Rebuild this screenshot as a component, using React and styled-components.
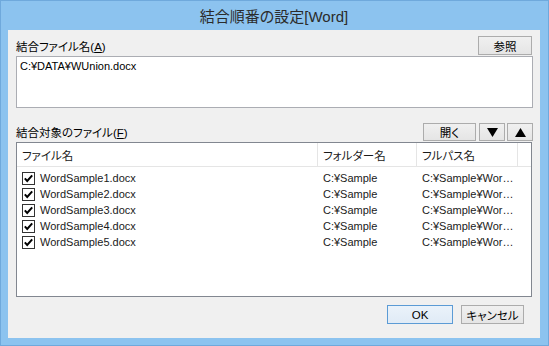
import React from 'react'
import styled, { createGlobalStyle } from 'styled-components'

const GlobalStyle = createGlobalStyle`
  html, body {
    margin: 0;
    padding: 0;
    background: #8cc3ef;
  }
  body {
    font-family: "Liberation Sans", "Noto Sans CJK JP", sans-serif;
    font-feature-settings: "palt";
  }
`

const Window = styled.div`
  width: 549px;
  height: 346px;
  box-sizing: border-box;
  background: #8cc3ef;
  border: 1px solid #6fa9dc;
  display: flex;
  flex-direction: column;
  padding: 0 8px 7px 7px;
`

const TitleBar = styled.div`
  height: 28px;
  display: flex;
  align-items: center;
  justify-content: center;
  font-size: 15px;
  color: #2b2b2b;
  padding-bottom: 1px;
`

const Client = styled.div`
  flex: 1;
  background: #f0f0f0;
  display: flex;
  flex-direction: column;
  padding: 6px 8px 0 8px;
  font-size: 11px;
  color: #000;
`

const Row = styled.div`
  display: flex;
  align-items: ${p => p.$align || 'center'};
  justify-content: space-between;
  height: ${p => p.$h}px;
  margin-top: ${p => p.$mt || 0}px;
`

const Label = styled.div`
  font-size: 11.5px;
  padding-bottom: ${p => p.$pb || 0}px;
  u { text-decoration: underline; }
`

const ButtonGroup = styled.div`
  display: flex;
  gap: ${p => p.$gap || 2}px;
  align-items: center;
  margin-right: ${p => p.$mr || 0}px;
`

const Button = styled.button`
  box-sizing: border-box;
  width: ${p => p.$w}px;
  height: ${p => p.$h || 19}px;
  padding: 0;
  margin: 0;
  font-family: inherit;
  font-feature-settings: "palt";
  font-size: 11.5px;
  color: #000;
  border: 1px solid ${p => (p.$default ? '#5b9bd5' : '#acacac')};
  background: ${p =>
    p.$default
      ? 'linear-gradient(#eaf2fa, #e0ebf6)'
      : 'linear-gradient(#f0f0f0, #e5e5e5)'};
  display: flex;
  align-items: center;
  justify-content: center;
`

const TextBox = styled.div`
  box-sizing: border-box;
  height: 52px;
  margin-top: 1px;
  margin-right: -1px;
  background: #fff;
  border: 1px solid #abadb3;
  padding: 2px 3px;
  line-height: 14px;
`

const ListBox = styled.div`
  box-sizing: border-box;
  height: 155px;
  margin-top: 1px;
  background: #fff;
  border: 1px solid #828790;
  display: flex;
  flex-direction: column;
`

const HeaderRow = styled.div`
  display: flex;
  height: 24px;
  border-bottom: 1px solid #e5e5e5;
  box-sizing: border-box;
  margin-bottom: 3px;
`

const HeaderCell = styled.div`
  width: ${p => p.$w}px;
  flex: ${p => (p.$w ? 'none' : 1)};
  box-sizing: border-box;
  border-right: ${p => (p.$w ? '1px solid #e5e5e5' : 'none')};
  padding-left: 5px;
  display: flex;
  align-items: center;
  font-size: 11.5px;
  color: #1a1a1a;
`

const ItemRow = styled.div`
  display: flex;
  height: 16px;
  align-items: center;
  color: #1a1a1a;
`

const Cell = styled.div`
  width: ${p => p.$w}px;
  box-sizing: border-box;
  padding-left: ${p => p.$pl || 5}px;
  display: flex;
  align-items: center;
  gap: 5px;
  white-space: nowrap;
  overflow: hidden;
`

const Footer = styled.div`
  display: flex;
  justify-content: flex-end;
  margin-top: 8px;
`

const CheckBox = () => (
  <svg width="13" height="13" viewBox="0 0 13 13">
    <rect x="0.5" y="0.5" width="12" height="12" fill="#fff" stroke="#333" />
    <polyline points="2.8,6.4 5.2,9 10.2,3.4" fill="none" stroke="#000" strokeWidth="2" />
  </svg>
)

const Triangle = ({ down }) => (
  <svg width="11" height="9" viewBox="0 0 11 9">
    {down ? <polygon points="0,0 11,0 5.5,9" fill="#000" /> : <polygon points="0,9 11,9 5.5,0" fill="#000" />}
  </svg>
)

const files = [1, 2, 3, 4, 5].map(n => ({
  name: `WordSample${n}.docx`,
  folder: 'C:¥Sample',
  full: 'C:¥Sample¥Wor…',
}))

export default function App() {
  return (
    <>
      <GlobalStyle />
      <Window>
        <TitleBar>結合順番の設定[Word]</TitleBar>
        <Client>
          <Row $h={19}>
            <Label>結合ファイル名(<u>A</u>)</Label>
            <Button $w={54}>参照</Button>
          </Row>
          <TextBox>C:¥DATA¥WUnion.docx</TextBox>
          <Row $h={20} $mt={13} $align="flex-end">
            <Label $pb={1}>結合対象のファイル(<u>F</u>)</Label>
            <ButtonGroup $gap={2} $mr={-1}>
              <Button $w={53} $h={18}>開く</Button>
              <Button $w={26} $h={18} style={{ marginLeft: 1 }}><Triangle down /></Button>
              <Button $w={26} $h={18}><Triangle /></Button>
            </ButtonGroup>
          </Row>
          <ListBox>
            <HeaderRow>
              <HeaderCell $w={301}>ファイル名</HeaderCell>
              <HeaderCell $w={99}>フォルダー名</HeaderCell>
              <HeaderCell $w={101}>フルパス名</HeaderCell>
              <HeaderCell />
            </HeaderRow>
            {files.map(f => (
              <ItemRow key={f.name}>
                <Cell $w={301} $pl={5}>
                  <CheckBox />
                  {f.name}
                </Cell>
                <Cell $w={99}>{f.folder}</Cell>
                <Cell $w={101}>{f.full}</Cell>
              </ItemRow>
            ))}
          </ListBox>
          <Footer>
            <ButtonGroup $gap={8} $mr={8}>
              <Button $w={66} $default>OK</Button>
              <Button $w={63}>キャンセル</Button>
            </ButtonGroup>
          </Footer>
        </Client>
      </Window>
    </>
  )
}
